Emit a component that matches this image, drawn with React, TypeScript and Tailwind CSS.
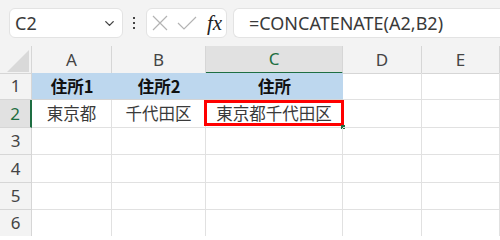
import { ChevronDown } from "lucide-react";

const cols = ["A", "B", "C", "D", "E"];
const gridCols = "grid grid-cols-[32px_80px_94px_137px_79px_1fr]";
const jp = "font-['Noto_Sans_CJK_JP','Noto_Sans',sans-serif]";

type Cell = { text?: string; bold?: boolean; fill?: boolean; selected?: boolean };

const rows: Cell[][] = [
  [
    { text: "住所1", bold: true, fill: true },
    { text: "住所2", bold: true, fill: true },
    { text: "住所", bold: true, fill: true },
    {},
    {},
  ],
  [{ text: "東京都" }, { text: "千代田区" }, { text: "東京都千代田区", selected: true }, {}, {}],
  [{}, {}, {}, {}, {}],
  [{}, {}, {}, {}, {}],
  [{}, {}, {}, {}, {}],
  [{}, {}, {}, {}, {}],
];

function Toolbar() {
  return (
    <div className="flex h-[46px] items-start gap-0 bg-[#f3f3f3] pt-2 pl-[9px]">
      <div className="flex h-[30px] w-[114px] items-center justify-between rounded-md border border-[#e3e3e3] bg-white pl-[5px] pr-[5px]">
        <span className="font-['Noto_Sans',sans-serif] text-[18px] text-[#3a3a3a]">C2</span>
        <ChevronDown className="size-[15px] text-[#444]" strokeWidth={2.2} />
      </div>
      <div className="ml-[10px] mr-[11px] flex h-[30px] flex-col items-center justify-center gap-[3px]">
        <span className="size-[2px] bg-[#444]" />
        <span className="size-[2px] bg-[#444]" />
        <span className="size-[2px] bg-[#444]" />
      </div>
      <div className="flex h-[30px] w-[81px] items-center rounded-md border border-[#e3e3e3] bg-white pl-[5px]">
        <svg width="16" height="16" viewBox="0 0 16 16" className="text-[#b3b3b3]">
          <path d="M1 1 L15 15 M15 1 L1 15" stroke="currentColor" strokeWidth="1.2" fill="none" />
        </svg>
        <svg width="20" height="14" viewBox="0 0 20 14" className="ml-[9px] text-[#b3b3b3]">
          <path d="M1 7 L7 13 L19 1" stroke="currentColor" strokeWidth="1.2" fill="none" />
        </svg>
        <span className="ml-[10px] font-['Liberation_Serif',serif] text-[21px] italic leading-none text-[#222]">
          fx
        </span>
      </div>
      <div className="ml-[6px] flex h-[30px] flex-1 items-center rounded-l-md border border-r-0 border-[#e3e3e3] bg-white pl-[15px]">
        <span className="font-['Noto_Sans',sans-serif] text-[18px] text-[#3a3a3a]">
          =CONCATENATE(A2,B2)
        </span>
      </div>
    </div>
  );
}

function HeaderRow() {
  return (
    <div className={`${gridCols} h-[27px] bg-[#f3f3f3]`}>
      <div className="relative border-r border-b border-[#d6d6d6]">
        <svg width="22" height="22" viewBox="0 0 22 22" className="absolute right-[2px] bottom-[1px]">
          <path d="M22 0 L22 22 L0 22 Z" fill="#d9d9d9" />
        </svg>
      </div>
      {cols.map((c) => (
        <div
          key={c}
          className={
            c === "C"
              ? "flex items-center justify-center border-r border-b-2 border-r-[#d6d6d6] border-b-[#1e6e42] bg-[#e1e1e1] text-[17px] text-[#1e6e42]"
              : "flex items-center justify-center border-r border-b border-[#d6d6d6] text-[17px] text-[#444]"
          }
        >
          <span className="font-['Noto_Sans',sans-serif]">{c}</span>
        </div>
      ))}
    </div>
  );
}

export default function App() {
  return (
    <div className={`h-[236px] w-[500px] overflow-hidden bg-white ${jp}`}>
      <Toolbar />
      <HeaderRow />
      {rows.map((row, i) => (
        <div key={i} className={`${gridCols} h-[27.4px]`}>
          <div
            className={
              i === 1
                ? "flex items-center justify-center border-r-2 border-b border-r-[#1e6e42] border-b-[#d6d6d6] bg-[#e1e1e1] text-[17px] text-[#1e6e42]"
                : "flex items-center justify-center border-r border-b border-[#d6d6d6] bg-[#f3f3f3] text-[17px] text-[#444]"
            }
          >
            <span className="font-['Noto_Sans',sans-serif]">{i + 1}</span>
          </div>
          {row.map((cell, j) => (
            <div
              key={j}
              className={
                (cell.fill
                  ? "bg-[#bdd7ee] border-b border-[#d4d4d4] "
                  : "border-r border-b border-[#e1e1e1] ") +
                "relative flex items-center justify-center text-[16.5px] " +
                (cell.bold ? "font-bold text-[#111]" : "text-[#3a3a3a]")
              }
            >
              {cell.text}
              {cell.selected && (
                <>
                  <div className="absolute top-0 -left-[2px] -right-[2px] bottom-[1px] border-[3px] border-[#ff0000]" />
                  <div className="absolute -right-[3px] -bottom-[2px] size-[4px] bg-[#1e6e42]" />
                </>
              )}
            </div>
          ))}
        </div>
      ))}
    </div>
  );
}
